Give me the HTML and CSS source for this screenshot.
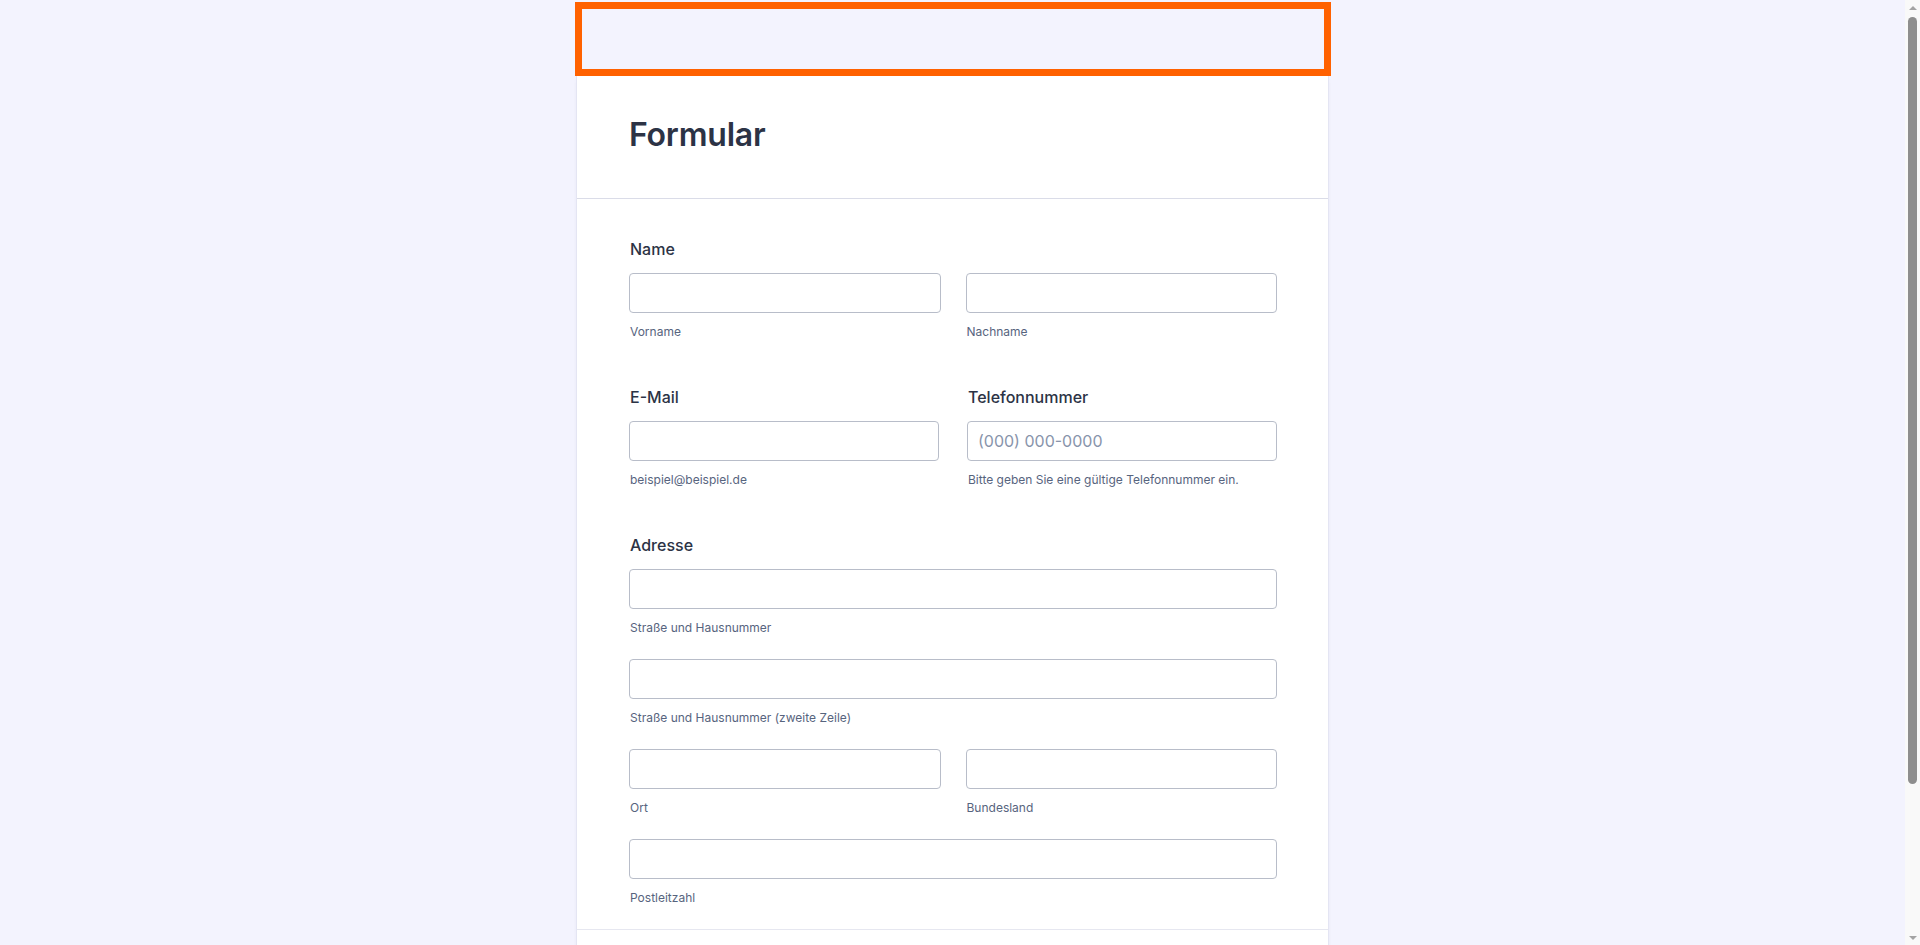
FILE: index.html
```html
<!DOCTYPE html>
<html lang="de">
<head>
<meta charset="utf-8">
<title>Formular</title>
<link rel="stylesheet" href="styles.css">
</head>
<body>
<div class="viewport">
  <div class="page">
    <div class="banner"></div>
    <main class="card">
      <header class="card-head">
        <h1 class="title">Formular</h1>
      </header>
      <section class="card-body">
        <div class="field">
          <div class="label">Name</div>
          <div class="cols">
            <div class="sub"><input class="inp" type="text"><span class="sublabel">Vorname</span></div>
            <div class="sub"><input class="inp" type="text"><span class="sublabel">Nachname</span></div>
          </div>
        </div>
        <div class="cols cols-wide">
          <div class="field">
            <div class="label">E-Mail</div>
            <div class="sub"><input class="inp" type="email"><span class="sublabel">beispiel@beispiel.de</span></div>
          </div>
          <div class="field">
            <div class="label">Telefonnummer</div>
            <div class="sub"><input class="inp" type="tel" placeholder="(000) 000-0000"><span class="sublabel">Bitte geben Sie eine gültige Telefonnummer ein.</span></div>
          </div>
        </div>
        <div class="field">
          <div class="label">Adresse</div>
          <div class="stack">
            <div class="sub"><input class="inp" type="text"><span class="sublabel">Straße und Hausnummer</span></div>
            <div class="sub"><input class="inp" type="text"><span class="sublabel">Straße und Hausnummer (zweite Zeile)</span></div>
            <div class="cols">
              <div class="sub"><input class="inp" type="text"><span class="sublabel">Ort</span></div>
              <div class="sub"><input class="inp" type="text"><span class="sublabel">Bundesland</span></div>
            </div>
            <div class="sub"><input class="inp" type="text"><span class="sublabel">Postleitzahl</span></div>
          </div>
        </div>
      </section>
      <div class="card-foot"></div>
    </main>
  </div>
  <div class="scrollbar" aria-hidden="true">
    <div class="sb-arrow sb-up"></div>
    <div class="sb-track"><div class="sb-thumb"></div></div>
    <div class="sb-arrow sb-down"></div>
  </div>
</div>
</body>
</html>
```
FILE: styles.css
```css
* { box-sizing: border-box; }
html, body {
  margin: 0;
  padding: 0;
  height: 100%;
  overflow: hidden;
  background: #F3F3FE;
  font-family: Inter, "Noto Sans", "Liberation Sans", sans-serif;
  color: #2C3345;
}
.viewport {
  display: flex;
  height: 100%;
}
.page {
  flex: 1;
  min-width: 0;
  height: 100%;
  overflow: hidden;
  padding-top: 2px;
}
.banner {
  width: 756px;
  height: 74px;
  margin: 0 auto;
  border: 7px solid #FF6100;
  background: #F3F3FE;
}
.card {
  width: 753px;
  margin: 0 auto;
  background: #FFFFFF;
  border-left: 1px solid #E4E5F3;
  border-right: 1px solid #E4E5F3;
  box-shadow: 0 4px 4px -1px rgba(42, 42, 98, 0.08);
}
.card-head {
  padding: 40px 51px 44px 52px;
  border-bottom: 1px solid #DADCE8;
}
.title {
  margin: 0;
  font-size: 32px;
  line-height: 38px;
  font-weight: 600;
  color: #2C3345;
  letter-spacing: -0.2px;
}
.card-body {
  padding: 40px 51px 24px 52px;
  border-bottom: 1px solid #E6E7F0;
  display: flex;
  flex-direction: column;
  gap: 48px;
}
.label {
  font-size: 16px;
  line-height: 20px;
  font-weight: 500;
  color: #2C3345;
  margin-bottom: 14px;
  padding-left: 1px;
}
.cols {
  display: grid;
  grid-template-columns: 1fr 1fr;
  column-gap: 25px;
}
.cols-wide {
  column-gap: 28px;
}
.stack {
  display: flex;
  flex-direction: column;
  gap: 24px;
}
.sub {
  display: flex;
  flex-direction: column;
}
.inp {
  display: block;
  width: 100%;
  height: 40px;
  margin: 0;
  padding: 0 10px;
  border: 1px solid #B8BDC9;
  border-radius: 4px;
  background: #FFFFFF;
  font-family: Inter, "Noto Sans", "Liberation Sans", sans-serif;
  font-size: 16px;
  color: #2C3345;
  outline: none;
}
.inp::placeholder {
  color: #8894AB;
}
.sublabel {
  margin-top: 11px;
  font-size: 12px;
  line-height: 15px;
  color: #57647E;
  padding-left: 1px;
}
.card-foot {
  height: 198px;
}

/* native-looking vertical scrollbar */
.scrollbar {
  width: 15px;
  flex: 0 0 15px;
  height: 100%;
  background: #F9F9F9;
  display: flex;
  flex-direction: column;
}
.sb-arrow {
  height: 15px;
  flex: 0 0 15px;
  display: flex;
  justify-content: center;
  align-items: center;
}
.sb-up::before,
.sb-down::before {
  content: "";
  width: 0;
  height: 0;
  border-left: 4px solid transparent;
  border-right: 4px solid transparent;
}
.sb-up::before {
  border-bottom: 4px solid #A3A3A3;
}
.sb-down::before {
  border-top: 4px solid #A3A3A3;
}
.sb-track {
  flex: 1;
  padding: 2px 3px 0 3px;
}
.sb-thumb {
  height: 767px;
  width: 9px;
  border-radius: 5px;
  background: #8E8E8E;
}
```
